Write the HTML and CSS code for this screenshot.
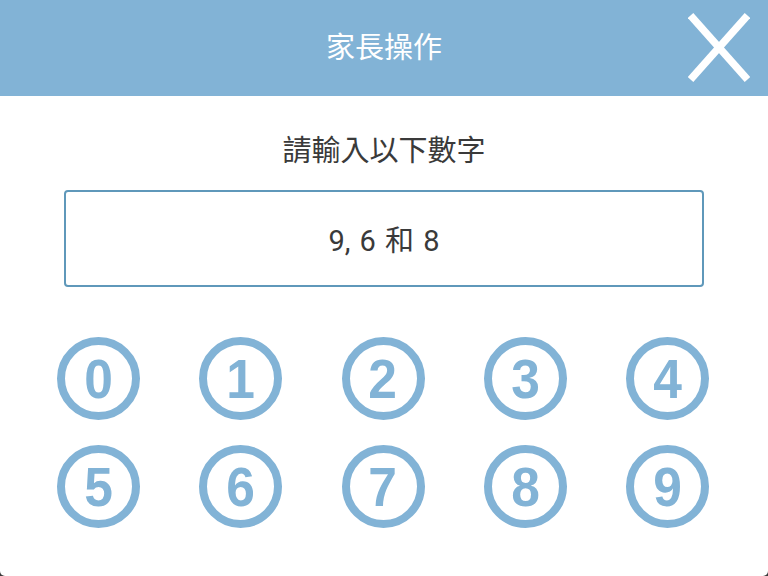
FILE: index.html
```html
<!DOCTYPE html>
<html lang="zh-Hant">
<head>
<meta charset="utf-8">
<link rel="stylesheet" href="styles.css">
</head>
<body>
<div class="dialog">
  <header class="bar">
    <h1 class="bar-title">家長操作</h1>
    <button class="close" aria-label="close">
      <svg width="62" height="69" viewBox="0 0 62 69">
        <line x1="2.5" y1="2.5" x2="59.5" y2="66.5" stroke="#fff" stroke-width="7.5"/>
        <line x1="59.5" y1="2.5" x2="2.5" y2="66.5" stroke="#fff" stroke-width="7.5"/>
      </svg>
    </button>
  </header>
  <main class="content">
    <p class="prompt">請輸入以下數字</p>
    <div class="answer">9, 6 和 8</div>
    <div class="keypad">
      <div class="key"><span>0</span></div>
      <div class="key"><span>1</span></div>
      <div class="key"><span>2</span></div>
      <div class="key"><span>3</span></div>
      <div class="key"><span>4</span></div>
      <div class="key"><span>5</span></div>
      <div class="key"><span>6</span></div>
      <div class="key"><span>7</span></div>
      <div class="key"><span>8</span></div>
      <div class="key"><span>9</span></div>
    </div>
  </main>
</div>
</body>
</html>
```
FILE: styles.css
```css
html, body {
  margin: 0;
  padding: 0;
  background: #3a3a3a;
}
.dialog {
  width: 768px;
  height: 576px;
  background: #fff;
  border-radius: 0 0 5px 5px;
  overflow: hidden;
  font-family: Roboto, "Noto Sans CJK TC", "Noto Sans", sans-serif;
}
.bar {
  position: relative;
  height: 96px;
  background: #82b3d6;
  display: flex;
  align-items: center;
  justify-content: center;
}
.bar-title {
  margin: 0;
  color: #fff;
  font-weight: 400;
  font-size: 29px;
  line-height: 40px;
  padding-bottom: 0;
}
.close {
  position: absolute;
  left: 688px;
  top: 13px;
  padding: 0;
  border: 0;
  background: none;
  width: 62px;
  height: 69px;
}
.close svg {
  display: block;
}
.content {
  display: flex;
  flex-direction: column;
  align-items: center;
}
.prompt {
  margin: 35px 0 0;
  font-size: 29px;
  line-height: 40px;
  color: #3a3a3a;
}
.answer {
  box-sizing: border-box;
  margin-top: 19px;
  width: 640px;
  height: 97px;
  border: 2px solid #5f98ba;
  border-radius: 4px;
  display: flex;
  align-items: center;
  justify-content: center;
  font-size: 29px;
  color: #3a3a3a;
  padding-bottom: 2px;
  word-spacing: 2px;
}
.keypad {
  margin-top: 50px;
  align-self: stretch;
  padding-left: 57px;
  display: grid;
  grid-template-columns: repeat(5, 83px);
  column-gap: 59.25px;
  row-gap: 25px;
}
.key {
  box-sizing: border-box;
  width: 83px;
  height: 83px;
  border: 8px solid #82b3d6;
  border-radius: 50%;
  display: flex;
  align-items: center;
  justify-content: center;
}
.key span {
  font-family: "Liberation Sans", Arial, sans-serif;
  font-weight: 700;
  font-size: 56px;
  line-height: 1;
  color: #82b3d6;
  transform: scaleX(0.92);
  display: block;
}
```
